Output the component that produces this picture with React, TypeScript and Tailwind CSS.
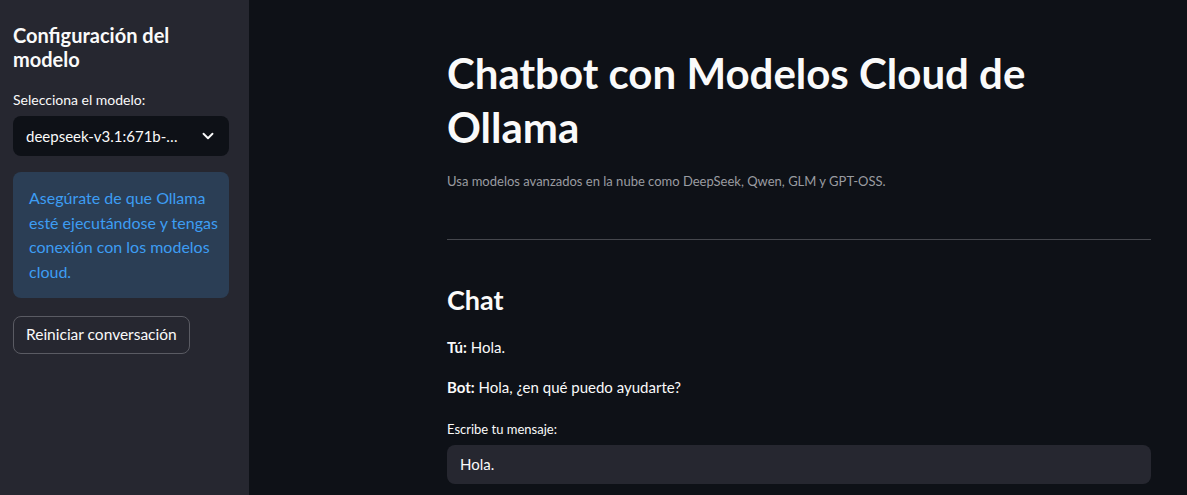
import { ChevronDown } from "lucide-react";

const font = { fontFamily: "Lato, 'Noto Sans', sans-serif" };

function Sidebar() {
  return (
    <aside className="w-[249px] shrink-0 bg-[#262730] px-[13px] pt-[23px]">
      <h2 className="text-[20px] font-bold leading-[24px] text-[#fafafa]">
        Configuración del
        <br />
        modelo
      </h2>

      <label className="mt-[19px] block text-[14px] leading-[20px] text-[#fafafa]">
        Selecciona el modelo:
      </label>
      <div className="mt-[6px] flex h-[40px] w-[216px] items-center justify-between rounded-lg bg-[#0e1117] pl-[13px] pr-[12px]">
        <span className="whitespace-nowrap text-[15px] text-[#fafafa]">
          deepseek-v3.1:671b-…
        </span>
        <ChevronDown className="h-[18px] w-[18px] text-[#fafafa]" strokeWidth={2.5} />
      </div>

      <div className="mt-[16px] w-[216px] rounded-lg bg-[#2b3e55] px-[16px] py-[14px] text-[16px] leading-[24.5px] text-[#3d9df3]">
        <p className="whitespace-nowrap">
          Asegúrate de que Ollama
          <br />
          esté ejecutándose y tengas
          <br />
          conexión con los modelos
          <br />
          cloud.
        </p>
      </div>

      <button className="mt-[18px] h-[38px] rounded-lg border border-[#5a5b63] bg-[#262730] px-[12px] text-[15.5px] text-[#fafafa]">
        Reiniciar conversación
      </button>
    </aside>
  );
}

function Main() {
  return (
    <main className="flex-1 bg-[#0e1117] pl-[198px] pr-[36px] pt-[46px]">
      <div className="w-[704px] text-[#fafafa]">
        <h1 className="text-[42px] font-bold leading-[54px]">
          Chatbot con Modelos Cloud de
          <br />
          Ollama
        </h1>
        <p className="mt-[17px] text-[13px] leading-[20px] text-[#9a9ca1]">
          Usa modelos avanzados en la nube como DeepSeek, Qwen, GLM y GPT-OSS.
        </p>
        <hr className="mt-[48px] border-0 border-t border-[#45474d]" />

        <h3 className="mt-[42px] text-[27px] font-bold leading-[36px]">Chat</h3>
        <p className="mt-[17px] text-[15px] leading-[24px]">
          <strong className="font-bold">Tú:</strong> Hola.
        </p>
        <p className="mt-[16px] text-[15px] leading-[24px]">
          <strong className="font-bold">Bot:</strong> Hola, ¿en qué puedo ayudarte?
        </p>
        <label className="mt-[20px] block text-[13px] leading-[20px]">
          Escribe tu mensaje:
        </label>
        <div className="mt-[6px] flex h-[39px] items-center rounded-lg bg-[#262730] px-[13px] text-[15px]">
          Hola.
        </div>
      </div>
    </main>
  );
}

export default function App() {
  return (
    <div className="flex h-[495px] w-[1187px] overflow-hidden" style={font}>
      <Sidebar />
      <Main />
    </div>
  );
}
